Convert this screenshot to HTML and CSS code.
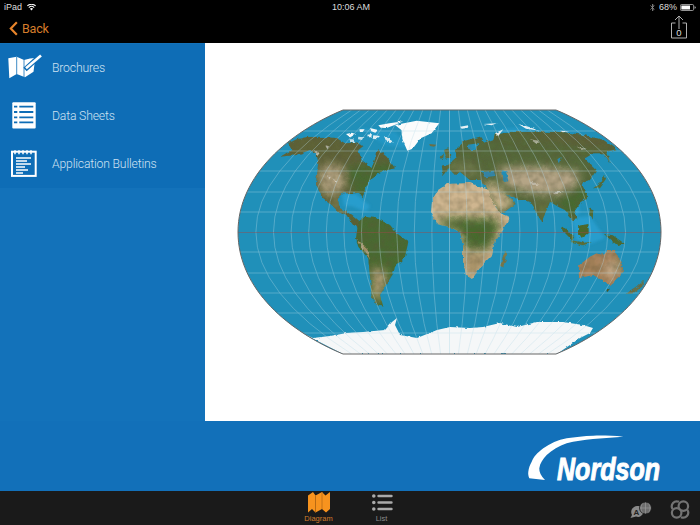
FILE: index.html
```html
<!DOCTYPE html>
<html lang="en">
<head>
<meta charset="utf-8">
<title>Nordson</title>
<link rel="stylesheet" href="styles.css">
</head>
<body>
<div class="app">
  <header class="top">
    <div class="status">
      <div class="status-left">iPad
        <svg class="wifi" viewBox="0 0 12 9"><path d="M6 8.600 3.900 6.200a3 3 0 0 1 4.200 0zM2.900 5.100l-1-1.100a6 6 0 0 1 8.200 0l-1 1.100a4.500 4.500 0 0 0-6.200 0zM.9 2.900 0 1.900a8.800 8.800 0 0 1 12 0l-.9 1a7.400 7.400 0 0 0-10.200 0z" fill="#fff"/></svg>
      </div>
      <div class="status-mid">10:06 AM</div>
      <div class="status-right">
        <svg class="bt" viewBox="0 0 6 10"><path d="M.5 2.600 5 7 3 9V1l2 2L.5 7.400" fill="none" stroke="#999" stroke-width=".9"/></svg>
        <span>68%</span>
        <svg class="batt" viewBox="0 0 24 10"><rect x=".5" y=".5" width="20" height="9" rx="1.800" fill="none" stroke="#ddd"/><rect x="2" y="2" width="13" height="6" fill="#fff"/><path d="M22 3.200c1 .2 1.500.8 1.500 1.800s-.5 1.600-1.500 1.800z" fill="#ddd"/></svg>
      </div>
    </div>
    <nav class="nav">
      <a class="back">
        <svg class="chev" viewBox="0 0 10 16"><path d="M8.700 1 2 8l6.700 7" fill="none" stroke="#e8842a" stroke-width="2.400"/></svg>
        Back
      </a>
      <div class="share">
        <svg class="share-arrow" viewBox="0 0 16 24"><path d="M4.500 8H.5v15h15V8h-4M8 14V1M4 5l4-4 4 4" fill="none" stroke="#b0b0b0" stroke-width="1"/></svg>
        <span class="share-n">0</span>
      </div>
    </nav>
  </header>

  <main class="middle">
    <aside class="side">
      <ul class="menu">
        <li class="item">
          <svg class="ico" viewBox="0 0 36 28"><path d="M2.300 4.300 10.700 2.700 18 6l6-1.500 5-.5-.5 6 -1 7.700L19 23.300 10.700 20l-7.400 4.300z" fill="#fff"/><path d="M10.700 3v17M18 6v17" stroke="#0e6db6" stroke-width=".8"/><path d="M19 15.500 35 1" stroke="#0e6db6" stroke-width="5"/><path d="M20 14.300 35 1.500" stroke="#fff" stroke-width="2.600"/></svg>
          <span>Brochures</span>
        </li>
        <li class="item">
          <svg class="ico" viewBox="0 0 36 28"><rect x="6.300" y=".3" width="23.400" height="26.300" rx="1" fill="#fff"/><path d="M8 4.700h3.300M13.300 4.700h14M8 10h3.300M13.300 10h14M8 15.300h3.300M13.300 15.300h14M8 20.300h3.300M13.300 20.300h14" stroke="#0e6db6" stroke-width="1.800"/></svg>
          <span>Data Sheets</span>
        </li>
        <li class="item">
          <svg class="ico" viewBox="0 0 36 28"><rect x="6" y="1.700" width="23.700" height="24.200" fill="none" stroke="#fff" stroke-width="2"/><path d="M9 .2v4M13 .2v4M17 .2v4M21 .2v4M25 .2v4" stroke="#fff" stroke-width="1.500"/><path d="M10 8h15M10 11h11M10 14h15M10 17h9M10 20h12M10 23h7" stroke="#fff" stroke-width="1.700"/></svg>
          <span>Application Bulletins</span>
        </li>
      </ul>
    </aside>
    <section class="canvas">
      <svg class="map" viewBox="205 43 495 378">
        <defs>
          <clipPath id="globe"><path d="M343 110H556C609 132 661 175 661 232 661 290 609 332 556 354H343C290 332 238 290 238 232 238 175 290 132 343 110z"/></clipPath>
          <filter id="rough" x="-5%" y="-5%" width="110%" height="110%">
            <feTurbulence type="fractalNoise" baseFrequency=".2" numOctaves="3" seed="4" result="n"/>
            <feDisplacementMap in="SourceGraphic" in2="n" scale="3.500" xChannelSelector="R" yChannelSelector="G" result="d"/>
            <feGaussianBlur in="d" stdDeviation=".4" result="b"/>
            <feTurbulence type="fractalNoise" baseFrequency=".14" numOctaves="2" seed="9"/>
            <feColorMatrix values="0 0 0 0 .1  0 0 0 0 .1  0 0 0 0 .04  .9 0 0 0 -.3"/>
            <feGaussianBlur stdDeviation=".5"/>
            <feComposite in2="b" operator="in" result="m"/>
            <feMerge><feMergeNode in="b"/><feMergeNode in="m"/></feMerge>
          </filter>
          <filter id="ice" x="-5%" y="-5%" width="110%" height="110%">
            <feTurbulence type="fractalNoise" baseFrequency=".25" numOctaves="2" seed="7" result="n"/>
            <feDisplacementMap in="SourceGraphic" in2="n" scale="2.500" xChannelSelector="R" yChannelSelector="G"/>
            <feGaussianBlur stdDeviation=".3"/>
          </filter>
          <filter id="soft" x="-30%" y="-30%" width="160%" height="160%"><feGaussianBlur stdDeviation="5"/></filter>
          <filter id="softz" x="-30%" y="-30%" width="160%" height="160%"><feGaussianBlur stdDeviation="13"/></filter>
          <filter id="soft2" x="-30%" y="-30%" width="160%" height="160%"><feGaussianBlur stdDeviation="1.500"/></filter>
          <g id="grid">
            <path d="M0 110V354M8.900 110Q26.300 232 8.900 354M17.800 110Q52.600 232 17.800 354M26.700 110Q78.900 232 26.700 354M35.600 110Q105.200 232 35.600 354M44.500 110Q131.500 232 44.500 354M53.400 110Q157.800 232 53.400 354M62.300 110Q184.100 232 62.300 354M71.200 110Q210.400 232 71.200 354M80.100 110Q236.700 232 80.100 354M89 110Q263 232 89 354M97.900 110Q289.300 232 97.900 354"/>
          </g>
          <clipPath id="amc"><path d="M150 170 185 150 175 130 200 118 235 110 280 110 320 115 345 130 375 128 400 138 385 150 395 180 425 205 440 165 442 148 470 170 495 205 470 210 445 222 420 240 405 265 398 295 388 278 370 280 340 280 322 298 330 325 350 335 372 352 395 372 380 385 350 345 320 330 300 310 280 295 270 280 258 250 262 215 265 190 258 160 240 150 200 165z"/></clipPath>
          <clipPath id="euc"><path d="M-20 225-25 200-5 195 10 180 20 172 15 150 45 122 90 110 102 128 130 118 135 100 170 95 250 95 330 95 400 105 460 120 500 148 470 155 482 190 460 160 430 160 405 175 440 210 420 240 395 250 415 290 390 310 372 335 382 358 368 360 345 330 325 320 300 305 275 365 258 335 235 300 205 300 165 282 200 310 150 345 115 280 95 240 60 240 30 215 15 225 -5 205z"/></clipPath>
          <clipPath id="afc"><path d="M447 184 470 183 488 190 497 210 504 215 510 217 503 230 495 240 492 255 482 265 472 279 466 275 463 260 463 245 460 232 450 227 437 224 431 213 432 200 438 190z"/></clipPath>
          <clipPath id="sac"><path d="M378 25 385-25 405-40 440-35 480-15 500 10 535 35 525 80 495 110 490 130 465 170 450 195 460 230 440 225 425 200 420 140 415 85 385 50z"/></clipPath>
          <clipPath id="auc"><path d="M385 145 388 105 420 80 440 70 460 75 470 60 495 60 520 115 510 140 480 165 455 150 430 135z"/></clipPath>
        </defs>

        <g clip-path="url(#globe)">
          <rect x="205" y="43" width="495" height="378" fill="#2090b9"/>

          <!-- shallow seas -->
          <g fill="#2aa0d2" filter="url(#soft2)" opacity=".8">
            <path d="M342 193 356 194 370 206 366 212 352 206 344 206z"/>
            <path d="M572 218 590 216 605 238 590 244 576 240z"/>
            <path d="M570 208 578 200 580 212 574 220z"/>
            <path d="M360 128 395 132 410 148 385 145z" opacity=".6"/>
            <path d="M495 130 530 126 520 134z" opacity=".6"/>
          </g>

          <g filter="url(#rough)">
            <!-- North America -->
            <g transform="translate(230 100) scale(.3333)">
              <g clip-path="url(#amc)">
                <rect x="140" y="90" width="380" height="300" fill="#5f6339"/>
                <g filter="url(#softz)">
                  <path d="M350 200 500 185 470 260 400 295 360 265z" fill="#476b32"/>
                  <path d="M275 195 335 195 345 260 320 285 278 280 265 240z" fill="#b0a07e"/>
                  <path d="M300 300 335 300 345 340 320 325z" fill="#8a8a58"/>
                  <path d="M340 330 400 385 370 370z" fill="#43682f"/>
                </g>
                <path d="M252 150l12 8 3 10-8-4zM285 135l12 4-5 9zM295 225l7 6-5 9zM310 235l8 10-6 3z" fill="#e4e2dc" opacity=".7"/>
              </g>
            </g>
            <!-- Eurasia -->
            <g transform="translate(450 100) scale(.3333)">
              <g clip-path="url(#euc)">
                <rect x="-30" y="90" width="550" height="280" fill="#55693a"/>
                <g filter="url(#softz)">
                  <path d="M140 200 290 200 390 215 380 255 320 285 240 280 170 260z" fill="#b5a586"/>
                  <path d="M320 290 420 250 410 300 375 350 340 330z" fill="#466b30"/>
                  <path d="M255 310 300 305 275 360z" fill="#6f7743"/>
                  <path d="M95 245 140 255 175 295 195 310 150 340z" fill="#d6bd96"/>
                  <path d="M-20 190 60 185 100 215 60 235 10 215z" fill="#70794c"/>
                  <path d="M130 100 460 105 500 150 300 125z" fill="#5e6138"/>
                </g>
                <path d="M240 118l28 4-8 10zM380 140l30 6-12 4zM240 245l30 8-22 2zM310 275l30 2-28 6z" fill="#e8e6e0" opacity=".6"/>
              </g>
              <!-- inland seas -->
              <path d="M95 216 132 212 136 228 104 232z" fill="#2090b9"/>
              <path d="M152 210 168 214 175 244 160 246 156 226z" fill="#2090b9"/>
              <path d="M52 134 85 130 80 150 60 150z" fill="#2090b9"/>
              <path d="M322 178 332 172 326 190z" fill="#2090b9"/>
              <!-- Japan, islands -->
              <path d="M430 265 450 250 462 225 468 236 450 262z" fill="#55703a"/>
              <path d="M420 325 430 330 428 358 418 345z" fill="#4f6d35"/>
              <path d="M340 380 372 412 366 420 336 390z" fill="#4d6a33"/>
              <path d="M385 378 415 372 416 400 395 416 384 400z" fill="#4c6a2c"/>
              <path d="M-18 150-5 145 2 170-10 176zM-28 170-18 160-22 182z" fill="#5f7040"/>
            </g>
            <!-- Africa -->
            <g clip-path="url(#afc)">
              <rect x="425" y="180" width="90" height="102" fill="#cfb690"/>
              <g filter="url(#soft)">
                <path d="M432 222 450 218 495 218 500 228 488 250 466 250 460 232z" fill="#466a2e"/>
                <path d="M463 255 488 256 482 266 470 280z" fill="#a48e64"/>
              </g>
            </g>
            <!-- Madagascar -->
            <path d="M505 251 508 253 503 267 500 266z" fill="#7c7a4c"/>
            <!-- South America -->
            <g transform="translate(230 230) scale(.3333)">
              <g clip-path="url(#sac)">
                <rect x="370" y="-50" width="180" height="290" fill="#4a6a30"/>
                <g filter="url(#softz)">
                  <path d="M425 110 465 120 470 150 450 210 430 210z" fill="#b09c74"/>
                </g>
                <path d="M378 25 395 50 420 90 412 55z" fill="#a8946c"/>
              </g>
            </g>
            <!-- Australia -->
            <g transform="translate(450 230) scale(.3333)">
              <g clip-path="url(#auc)">
                <rect x="380" y="55" width="145" height="115" fill="#a8835c"/>
                <g filter="url(#softz)">
                  <path d="M470 100 510 95 500 140 460 135z" fill="#c7ad8c"/>
                  <path d="M500 60 525 115 510 135 500 90z" fill="#6b7343"/>
                </g>
              </g>
              <path d="M462 12 488 16 525 42 505 48 480 28z" fill="#4c6b33"/>
              <path d="M466 178 480 176 472 186z" fill="#44582c"/>
              <path d="M530 192 560 172 580 152 582 166 550 190z" fill="#6b7248"/>
              <path d="M362 30 400 38 425 36 400 46 370 40z" fill="#5a7038"/>
            </g>
          </g>

          <!-- Greenland and the Arctic -->
          <g fill="#fbfcfc" filter="url(#ice)">
            <g transform="translate(230 100) scale(.3333)">
              <path d="M495 75 560 62 628 70 605 100 572 115 548 146 532 152 518 120 514 90z"/>
              <path d="M445 76 478 70 520 64 496 74 470 84 452 83z"/>
              <path d="M348 102 366 98 378 103 360 112z"/>
              <path d="M388 88 404 88 398 96 390 96zM420 84 444 90 436 98 424 94z"/>
              <path d="M412 104 426 102 424 112 414 112zM430 106 450 108 440 118 428 116z" opacity=".9"/>
              <path d="M462 108 488 124 480 130 466 118z" opacity=".85"/>
              <path d="M358 118 370 118 376 126 362 126zM385 110 400 112 396 120 384 118z" opacity=".75"/>
            </g>
            <g transform="translate(450 100) scale(.3333)">
              <path d="M30 80l25-4-2 8-18 2zM100 72l40-2-15 6zM205 72l30 8 35 12-42-6zM330 92l28 2-20 3zM135 100l25-12-15 20z" opacity=".9"/>
            </g>
          </g>
          <g transform="translate(230 100) scale(.3333)">
            <path d="M598 132l22 2-8 6-12-2z" fill="#6a6f47"/>
          </g>

          <!-- Antarctica -->
          <path d="M300 332 313 338 330 336 347 333 363 332 385 330 392 322 397 318 395 325 400 335 417 338 437 330 450 327 470 328 483 327 500 323 517 327 537 322 563 322 583 325 593 328 590 333 580 338 557 354H343z" fill="#f5f7f8" filter="url(#ice)"/>

          <!-- Graticule -->
          <g fill="none" stroke="#b9dbe8" stroke-width=".7" opacity=".5">
            <use href="#grid" transform="translate(449.500 0)"/>
            <use href="#grid" transform="translate(449.500 0) scale(-1 1)"/>
            <path d="M205 131H700M205 151H700M205 171H700M205 192H700M205 212H700M205 252H700M205 273H700M205 293H700M205 313H700M205 333H700"/>
          </g>
          <path d="M205 232.500H700" stroke="#a04848" stroke-width=".8" opacity=".55"/>
        </g>
        <path d="M343 110H556C609 132 661 175 661 232 661 290 609 332 556 354H343C290 332 238 290 238 232 238 175 290 132 343 110z" fill="none" stroke="#666" stroke-width="1"/>
      </svg>
    </section>
  </main>

  <div class="band">
    <svg class="logo" viewBox="0 0 136 48">
      <path d="M95.300 1.700C84 .6 73 .4 65.300.7 56 1 47 2 38.700 3.300 30 5 22 8.500 15.300 13.300 9 18 5.500 22 3.700 26.700 1.800 30 .8 33 .3 36.700 0 39 .4 41 1.300 43.300L17 45C13 41 11 37 11.300 33.300 12 28 15 24 18.700 20 24 15 31 11 38.700 8.300 47 6 56 5 65 4z" fill="#fff"/>
      <text class="logo-text" x="29" y="45" textLength="103" lengthAdjust="spacingAndGlyphs">Nordson</text>
    </svg>
  </div>

  <footer class="tabs">
    <div></div>
    <div class="tab-group">
      <div class="tab on">
        <svg class="tab-ico" viewBox="0 0 22 21"><path d="M0 3.500 5 0 7.500 3.500v17L4 17 0 20.500zM7.500 3.500 14 0v17l-6.500 3.500zM14 0 17.500 3.500 22 0v17L18 20.500 14 17z" fill="#f7931e"/><path d="M7.500 3.500v17" stroke="#a85f10" stroke-width=".8"/><path d="M14 0v17" stroke="#b86a14" stroke-width=".8"/></svg>
        <span>Diagram</span>
      </div>
      <div class="tab">
        <svg class="tab-ico" viewBox="0 0 22 21"><path d="M1 4a1.800 1.800 0 1 0 3.600 0 1.800 1.800 0 1 0-3.600 0zM1 10.500a1.800 1.800 0 1 0 3.600 0 1.800 1.800 0 1 0-3.600 0zM1 17a1.800 1.800 0 1 0 3.600 0 1.800 1.800 0 1 0-3.600 0z" fill="#aaa"/><path d="M7.500 4h13M7.500 10.500h13M7.500 17h13" stroke="#aaa" stroke-width="2.400" stroke-linecap="round"/></svg>
        <span>List</span>
      </div>
    </div>
    <div class="tab-tools">
      <svg class="tool" viewBox="0 0 22 16"><path d="M7 4a6 6 0 0 0-5 9L.5 16 6 14.500A5.500 5.500 0 1 0 7 4z" fill="#8a8a8a"/><circle cx="15.500" cy="6" r="6" fill="#6e6e6e" stroke="#1a1a1a" stroke-width=".8"/><path d="M15.500 .5v11M10 6h11M12.500 1.500c-2 3-2 6 0 9M18.500 1.500c2 3 2 6 0 9" stroke="#a0a0a0" stroke-width=".6" fill="none"/><text class="tool-a" x="6.500" y="12.500">A</text></svg>
      <svg class="tool link" viewBox="0 0 22 22"><g fill="none" stroke="#737373" stroke-width="2.300"><circle cx="7.500" cy="14.500" r="5"/><circle cx="14.500" cy="7.500" r="5"/><path d="M3.200 10.500C.5 6 5 .8 10 3M18.800 11.500C21.500 16 17 21.200 12 19"/></g></svg>
    </div>
  </footer>
</div>
</body>
</html>
```
FILE: styles.css
```css
* { box-sizing: border-box; }
html, body { margin: 0; padding: 0; background: #000; }
body { font-family: "Liberation Sans", Arial, sans-serif; }
.app { width: 700px; height: 525px; display: flex; flex-direction: column; overflow: hidden; }

.top { background: #000; height: 43px; flex: none; display: flex; flex-direction: column; }
.status { height: 14px; display: grid; grid-template-columns: 1fr auto 1fr; align-items: center; padding: 0 4px 0 4px; font-size: 9px; color: #ddd; }
.status-left { display: flex; align-items: center; gap: 5px; }
.wifi { width: 9px; height: 7px; }
.status-mid { padding-left: 2px; }
.status-right { display: flex; align-items: center; justify-content: flex-end; gap: 3px; }
.bt { width: 5px; height: 9px; margin-right: 1px; }
.batt { width: 16px; height: 7px; }

.nav { flex: 1; display: flex; align-items: center; justify-content: space-between; padding: 0 13px 0 9px; }
.back { display: flex; align-items: center; gap: 4px; color: #d67d2b; font-family: Roboto, "Liberation Sans", sans-serif; font-size: 12.500px; letter-spacing: -.2px; }
.chev { width: 9px; height: 15px; }
.share { position: relative; width: 16px; height: 24px; margin-top: -3px; }
.share-arrow { width: 16px; height: 24px; display: block; }
.share-n { position: absolute; left: 0; right: 0; top: 12px; text-align: center; color: #ddd; font-size: 9.500px; }

.middle { flex: none; height: 378px; display: flex; }
.side { width: 205px; flex: none; background: #1372ba; }
.menu { margin: 0; padding: 1px 0 0; list-style: none; }
.item { height: 48px; display: flex; align-items: center; padding-left: 6px; color: #cfe2f2; font-family: Roboto, "Liberation Sans", sans-serif; font-weight: 300; font-size: 12.200px; letter-spacing: -.17px; gap: 10px; background: #0e6db6; }
.ico { width: 36px; height: 28px; flex: none; }
.canvas { flex: 1; background: #fff; }
.map { display: block; width: 495px; height: 378px; }

.band { flex: none; height: 70px; background: #1270b9; display: flex; justify-content: flex-end; align-items: flex-start; padding: 14px 36px 0 0; }
.logo { width: 136px; height: 48px; overflow: visible; }
.logo-text { font: italic 700 31px "Liberation Sans", Arial, sans-serif; fill: #fff; stroke: #fff; stroke-width: 1px; }

.tabs { flex: 1; background: #1a1a1a; display: grid; grid-template-columns: 1fr auto 1fr; }
.tab-group { display: flex; }
.tab { width: 63px; display: flex; flex-direction: column; align-items: center; padding-top: 1px; color: #8a8a8a; font-size: 7.500px; }
.tab.on { color: #d07a2c; }
.tab-ico { width: 22px; height: 21px; margin-bottom: 1px; }
.tab-tools { display: flex; justify-content: flex-end; align-items: flex-end; gap: 17px; padding: 0 9px 7px 0; }
.tool { width: 22px; height: 16px; }
.tool.link { height: 21px; margin-bottom: -2px; }
.tool-a { font: 700 8px "Liberation Sans", Arial, sans-serif; fill: #222; text-anchor: middle; }
```
